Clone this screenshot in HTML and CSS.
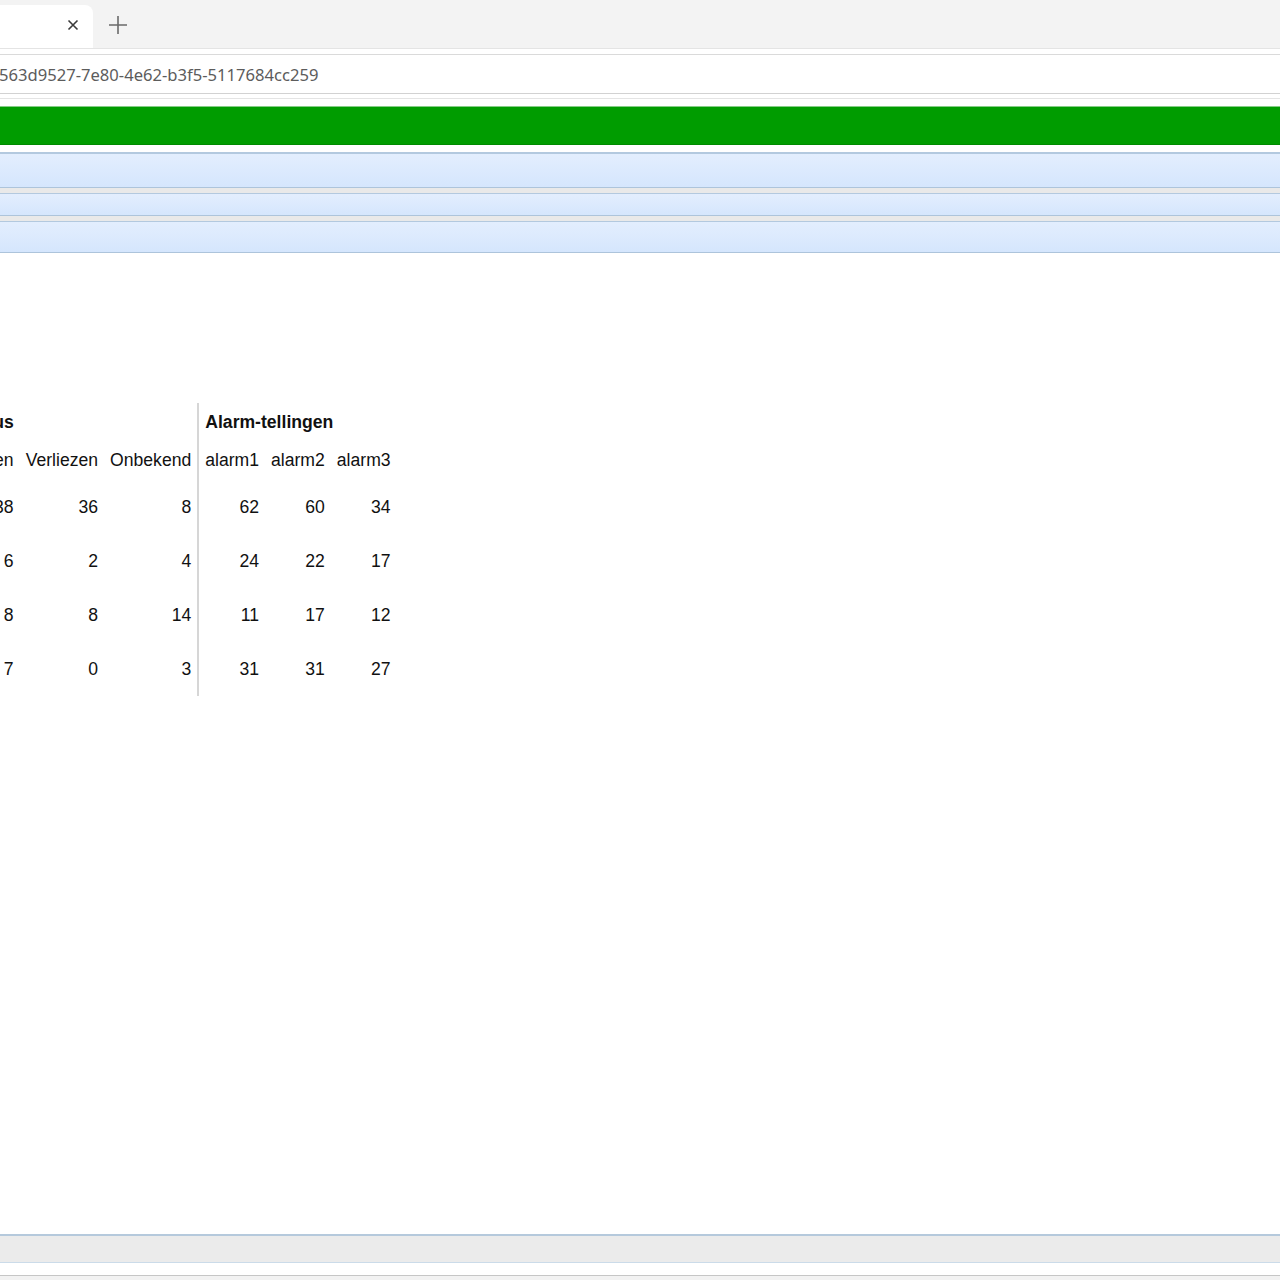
FILE: index.html
```html
<!DOCTYPE html>
<html lang="nl">
<head>
<meta charset="utf-8">
<title>Alarm-tellingen</title>
<link rel="stylesheet" href="styles.css">
</head>
<body>
<div class="window">
  <div class="tabstrip">
    <div class="tab">
      <span class="tab-close">
        <svg width="16" height="16" viewBox="0 0 16 16"><path d="M3.5 3.5 L12.5 12.5 M12.5 3.5 L3.5 12.5" stroke="#3a3a3a" stroke-width="1.6" fill="none"/></svg>
      </span>
    </div>
    <span class="newtab">
      <svg width="20" height="20" viewBox="0 0 20 20"><path d="M10 1 V19 M1 10 H19" stroke="#6a6a6a" stroke-width="1.6" fill="none"/></svg>
    </span>
  </div>
  <div class="toolbar">
    <div class="omnibox"><span class="url">563d9527-7e80-4e62-b3f5-5117684cc259</span></div>
  </div>
  <div class="page">
    <div class="bar-green"></div>
    <div class="bars">
      <div class="bar-blue b1"></div>
      <div class="bar-blue b2"></div>
      <div class="bar-blue b3"></div>
    </div>
    <main class="content">
      <table class="stats">
        <thead>
          <tr class="grp">
            <th colspan="3" class="grp-first">Status</th>
            <th colspan="3" class="sep">Alarm-tellingen</th>
          </tr>
          <tr class="cols">
            <th>Winnen</th>
            <th>Verliezen</th>
            <th>Onbekend</th>
            <th class="sep">alarm1</th>
            <th>alarm2</th>
            <th>alarm3</th>
          </tr>
        </thead>
        <tbody>
          <tr><td>38</td><td>36</td><td>8</td><td class="sep">62</td><td>60</td><td>34</td></tr>
          <tr><td>6</td><td>2</td><td>4</td><td class="sep">24</td><td>22</td><td>17</td></tr>
          <tr><td>8</td><td>8</td><td>14</td><td class="sep">11</td><td>17</td><td>12</td></tr>
          <tr><td>7</td><td>0</td><td>3</td><td class="sep">31</td><td>31</td><td>27</td></tr>
        </tbody>
      </table>
    </main>
    <div class="footer"></div>
  </div>
  <div class="bottom-gap"></div>
  <div class="bottom-line"></div>
</div>
</body>
</html>
```
FILE: styles.css
```css
html, body {
  margin: 0;
  padding: 0;
  background: #ffffff;
}

body {
  width: 1280px;
  height: 1280px;
  overflow: hidden;
  font-family: "Liberation Sans", Arial, sans-serif;
}

.window {
  height: 1280px;
  display: flex;
  flex-direction: column;
}

/* ---- tab strip ---- */
.tabstrip {
  height: 48px;
  background: #f3f3f3;
  display: flex;
  align-items: flex-end;
  flex: none;
}

.tab {
  width: 200px;
  margin-left: -107px;
  height: 43px;
  background: #ffffff;
  border-radius: 8px 8px 0 0;
  display: flex;
  align-items: center;
  justify-content: flex-end;
  box-sizing: border-box;
  padding-right: 12px;
}

.tab-close {
  width: 16px;
  height: 16px;
  display: flex;
  margin-top: -3px;
}

.newtab {
  width: 20px;
  height: 20px;
  display: flex;
  margin-left: 15px;
  align-self: center;
  margin-top: 2px;
}

/* ---- toolbar ---- */
.toolbar {
  flex: none;
  background: #ffffff;
  border-top: 1px solid #e4e4e4;
  border-bottom: 1px solid #e4e4e4;
  padding-top: 5px;
  padding-bottom: 4px;
}

.omnibox {
  height: 38px;
  border-top: 1px solid #dadada;
  border-bottom: 1px solid #d2d2d2;
  display: flex;
  align-items: center;
}

.url {
  font-family: "Noto Sans", "Open Sans", sans-serif;
  font-size: 16.6px;
  color: #5c5c5c;
  margin-left: -1px;
  white-space: nowrap;
}

/* ---- page ---- */
.page {
  flex: 1;
  display: flex;
  flex-direction: column;
}

.bar-green {
  margin-top: 7px;
  height: 37px;
  background: #009c00;
  border-top: 1px solid #86cc86;
  border-bottom: 1px solid #008a00;
}

.bars {
  margin-top: 7px;
  background: #e9e9e9;
  display: flex;
  flex-direction: column;
  gap: 5px;
}

.bar-blue {
  background: linear-gradient(#e3eefe, #d5e6fd);
  border-top: 1px solid #b3c9df;
  border-bottom: 1px solid #adc4db;
}

.b1 {
  height: 33px;
  border-top-width: 2px;
}

.b2 {
  height: 21px;
}

.b3 {
  height: 30px;
}

.content {
  flex: 1;
  padding-top: 150px;
}

.stats {
  border-collapse: separate;
  border-spacing: 0;
  font-family: "Liberation Sans", Arial, sans-serif;
  font-size: 17.6px;
  color: #111111;
  margin-left: -52px;
}

.stats th,
.stats td {
  padding: 0 6px;
  white-space: nowrap;
}

.grp th {
  height: 38px;
  font-weight: bold;
  text-align: left;
}

.grp .grp-first {
  padding-left: 12px;
}

.cols th {
  height: 39px;
  font-weight: normal;
  text-align: left;
}

.stats td {
  height: 54px;
  text-align: right;
}

.stats .sep {
  border-left: 2px solid #d6d6d6;
}

.footer {
  height: 26px;
  background: #ebebeb;
  border-top: 2px solid #b5c9dc;
  border-bottom: 1px solid #cbdbe9;
}

.bottom-gap {
  height: 12px;
  flex: none;
}

.bottom-line {
  flex: none;
  height: 4px;
  border-top: 1px solid #c6c6c6;
  background: #f2f2f2;
}
```
